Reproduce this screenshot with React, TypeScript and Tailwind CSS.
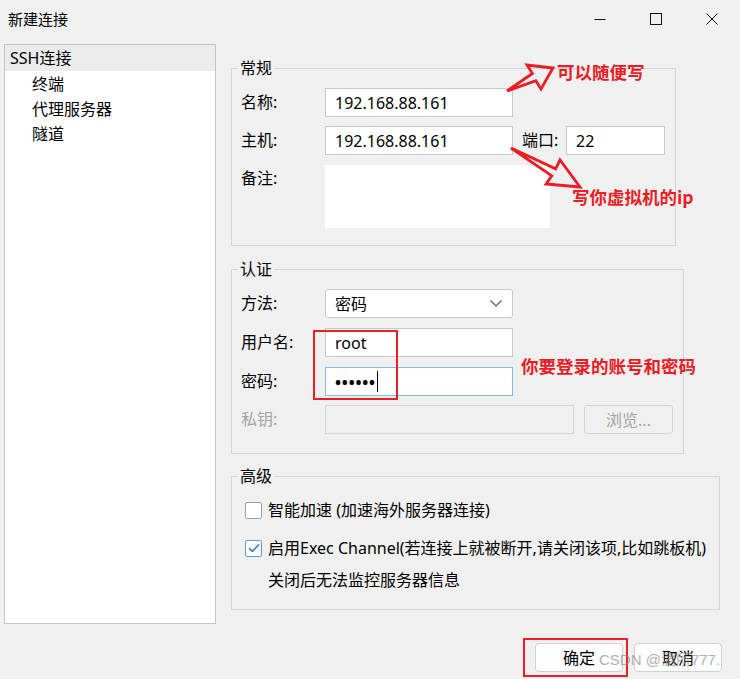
import React from "react";

const inputCls =
  "h-[29px] bg-white border border-[#c8c8c8] flex items-center pl-[9px] text-[16px] leading-[20px] text-black";

function Label({ children, disabled }: { children: React.ReactNode; disabled?: boolean }) {
  return (
    <div
      className={`w-[84px] shrink-0 h-[29px] leading-[29px] text-[16px] ${
        disabled ? "text-[#a3a3a3]" : "text-black"
      }`}
    >
      {children}
    </div>
  );
}

function Group({
  title,
  width,
  className,
  children,
}: {
  title: string;
  width: string;
  className: string;
  children: React.ReactNode;
}) {
  return (
    <fieldset className={`border border-[#d5d5d5] ${width} ${className}`}>
      <legend className="ml-[6px] px-[2px] text-[16px] leading-[20px] text-black">{title}</legend>
      {children}
    </fieldset>
  );
}

export default function App() {
  return (
    <div className="relative w-[740px] h-[679px] overflow-hidden bg-[#f0f0f0] font-['Noto_Sans','Noto_Sans_CJK_SC',sans-serif] text-black">
      {/* Title bar */}
      <div className="flex h-[38px] items-center">
        <div className="pl-[8px] text-[15px] leading-[20px]">新建连接</div>
        <div className="ml-auto flex h-full">
          <div className="flex w-[56px] items-center justify-center">
            <svg width="12" height="12" viewBox="0 0 12 12">
              <line x1="0.5" y1="6.5" x2="11.5" y2="6.5" stroke="#111" strokeWidth="1" />
            </svg>
          </div>
          <div className="flex w-[56px] items-center justify-center">
            <svg width="12" height="12" viewBox="0 0 12 12">
              <rect x="0.5" y="0.5" width="11" height="11" fill="none" stroke="#111" strokeWidth="1" />
            </svg>
          </div>
          <div className="flex w-[56px] items-center justify-center">
            <svg width="12" height="12" viewBox="0 0 12 12">
              <path d="M0.5 0.5 L11.5 11.5 M11.5 0.5 L0.5 11.5" stroke="#111" strokeWidth="1" />
            </svg>
          </div>
        </div>
      </div>

      {/* Body */}
      <div className="mt-[6px] flex h-[580px] pl-[4px]">
        {/* Tree */}
        <div className="h-full w-[212px] border border-[#c4c4c4] bg-white text-[16px]">
          <div className="h-[26px] bg-[#ebebeb] pl-[5px] leading-[26px]">SSH连接</div>
          <div className="pt-[1px]">
            <div className="h-[25px] pl-[27px] leading-[25px]">终端</div>
            <div className="h-[25px] pl-[27px] leading-[25px]">代理服务器</div>
            <div className="h-[25px] pl-[27px] leading-[25px]">隧道</div>
          </div>
        </div>

        {/* Right side */}
        <div className="ml-[15px] flex w-[489px] flex-col">
          <Group title="常规" width="w-[445px]" className="mt-[14px]">
            <div className="flex flex-col pb-[17px] pl-[9px] pt-[10px]">
              <div className="flex items-center">
                <Label>名称:</Label>
                <div className={`${inputCls} w-[188px]`}>192.168.88.161</div>
              </div>
              <div className="mt-[9px] flex items-center">
                <Label>主机:</Label>
                <div className={`${inputCls} w-[188px]`}>192.168.88.161</div>
                <div className="ml-[9px] w-[44px] text-[16px] leading-[29px]">端口:</div>
                <div className={`${inputCls} w-[99px] pl-[9px]`}>22</div>
              </div>
              <div className="mt-[10px] flex items-start">
                <div className="w-[84px] shrink-0 pt-[2px] text-[16px] leading-[22px]">备注:</div>
                <div className="h-[63px] w-[225px] bg-white" />
              </div>
            </div>
          </Group>

          <Group title="认证" width="w-[453px]" className="mt-[13px]">
            <div className="flex flex-col pb-[19px] pl-[9px] pt-[10px]">
              <div className="flex items-center">
                <Label>方法:</Label>
                <div className={`${inputCls} w-[188px] justify-between rounded-[3px] pr-[10px]`}>
                  <span>密码</span>
                  <svg width="12" height="7" viewBox="0 0 12 7">
                    <path d="M0.5 0.5 L6 6 L11.5 0.5" fill="none" stroke="#555" strokeWidth="1.1" />
                  </svg>
                </div>
              </div>
              <div className="mt-[10px] flex items-center">
                <Label>用户名:</Label>
                <div className={`${inputCls} w-[188px]`}>root</div>
              </div>
              <div className="mt-[10px] flex items-center">
                <Label>密码:</Label>
                <div className="flex h-[29px] w-[188px] items-center border border-[#86b7e6] bg-white pl-[9px]">
                  <span className="text-[16px] font-bold leading-[20px] tracking-[0.8px]">••••••</span>
                  <span className="ml-[1px] h-[21px] w-[1px] bg-black" />
                </div>
              </div>
              <div className="mt-[9px] flex items-center">
                <Label disabled>私钥:</Label>
                <div className="h-[29px] w-[249px] border border-[#d6d6d6] bg-[#f0f0f0]" />
                <div className="ml-[10px] flex h-[29px] w-[89px] items-center justify-center rounded-[3px] border border-[#d3d3d3] bg-[#f0f0f0] text-[16px] text-[#a3a3a3]">
                  浏览...
                </div>
              </div>
            </div>
          </Group>

          <Group title="高级" width="w-[489px]" className="mt-[12px]">
            <div className="flex flex-col pb-[17px] pl-[13px] pt-[12px] text-[16px]">
              <div className="flex h-[24px] items-center">
                <div className="h-[17px] w-[17px] rounded-[2px] border border-[#a0a0a0] bg-white" />
                <span className="ml-[6px] leading-[24px]">智能加速 (加速海外服务器连接)</span>
              </div>
              <div className="mt-[14px] flex h-[24px] items-center">
                <div className="flex h-[17px] w-[17px] items-center justify-center rounded-[2px] border border-[#5b9ee4] bg-white">
                  <svg width="12" height="10" viewBox="0 0 12 10">
                    <path d="M1 5.2 L4.4 8.4 L11 1.4" fill="none" stroke="#2f7fd4" strokeWidth="1.6" />
                  </svg>
                </div>
                <span className="ml-[6px] leading-[24px]">
                  启用Exec Channel(若连接上就被断开,请关闭该项,比如跳板机)
                </span>
              </div>
              <div className="mt-[8px] flex h-[24px] items-center pl-[23px] leading-[24px]">
                关闭后无法监控服务器信息
              </div>
            </div>
          </Group>
        </div>
      </div>

      {/* Buttons */}
      <div className="mt-[19px] flex justify-end gap-[11px] pr-[18px]">
        <div className="flex h-[29px] w-[88px] items-center justify-center rounded-[4px] border border-[#d0d0d0] bg-[#fdfdfd] text-[16px]">
          确定
        </div>
        <div className="flex h-[29px] w-[88px] items-center justify-center rounded-[4px] border border-[#d0d0d0] bg-[#fdfdfd] text-[16px]">
          取消
        </div>
      </div>

      {/* Annotations (overlay) */}
      <svg className="pointer-events-none absolute left-0 top-0" width="740" height="679" viewBox="0 0 740 679">
        <g fill="none" stroke="#ec1c24" strokeWidth="2.8" strokeLinejoin="miter">
          <polygon points="507,91 532.4,73.5 527,65 553,68 541,89 535.8,80.7" />
          <polygon points="511,148 555.6,168.8 560,160 580,187 546,184 551.8,175.8" />
        </g>
        <g fill="none" stroke="#e8202a" strokeWidth="2">
          <rect x="314" y="331" width="83" height="68" />
          <rect x="524" y="639" width="103" height="37" />
        </g>
      </svg>

      <div className="pointer-events-none absolute left-[557px] top-[60px] whitespace-nowrap font-['Noto_Sans_CJK_SC',sans-serif] text-[17.5px] font-bold leading-[24px] text-[#ec1c24]">
        可以随便写
      </div>
      <div className="pointer-events-none absolute left-[572px] top-[185px] whitespace-nowrap font-['Noto_Sans_CJK_SC',sans-serif] text-[17.5px] font-bold leading-[24px] text-[#ec1c24]">
        写你虚拟机的ip
      </div>
      <div className="pointer-events-none absolute left-[521px] top-[354px] whitespace-nowrap font-['Noto_Sans_CJK_SC',sans-serif] text-[17.5px] font-bold leading-[24px] text-[#ec1c24]">
        你要登录的账号和密码
      </div>

      <div className="pointer-events-none absolute left-[599px] top-[650px] whitespace-nowrap font-['Liberation_Sans','Noto_Sans_CJK_SC',sans-serif] text-[15px] leading-[20px] text-[#8c8c8c]/70">
        CSDN @湄所777.
      </div>
    </div>
  );
}
